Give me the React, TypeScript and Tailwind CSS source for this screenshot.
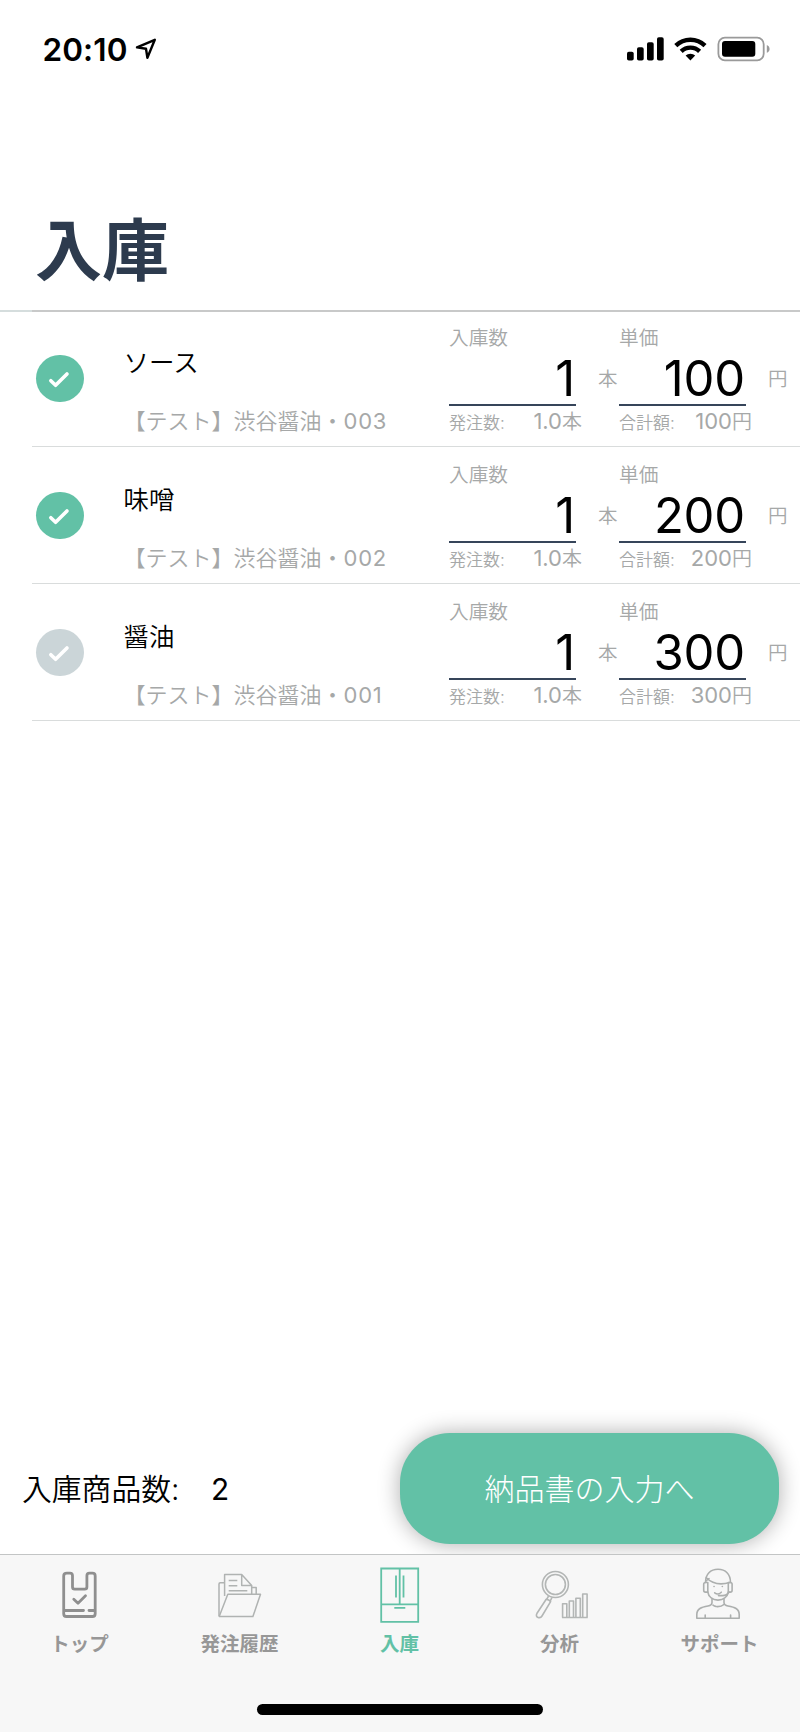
type Item = {
  name: string;
  code: string;
  price: number;
  checked: boolean;
};

const items: Item[] = [
  { name: "ソース", code: "003", price: 100, checked: true },
  { name: "味噌", code: "002", price: 200, checked: true },
  { name: "醤油", code: "001", price: 300, checked: false },
];

function StatusBar() {
  return (
    <div className="flex h-[100px] items-start justify-between pt-[30px] pl-[42.5px] pr-5">
      <div className="flex items-center">
        <span className="-mt-px w-[87.5px] text-[31.5px] leading-[38px] font-semibold tracking-[0.1px] whitespace-nowrap">
          20:10
        </span>
        <svg className="h-10 w-8" viewBox="130 30 32 40" fill="none">
          <path
            d="M137 47.4 154.8 39.8 147.4 57.8 146 48.8Z"
            stroke="#000"
            strokeWidth="2.4"
            strokeLinejoin="round"
          />
        </svg>
      </div>
      <svg className="h-10 w-40" viewBox="620 30 160 40" fill="none">
        <rect x="627" y="51.7" width="6.7" height="8.8" rx="1.8" fill="#000" />
        <rect x="637" y="47.3" width="6.7" height="13.2" rx="1.8" fill="#000" />
        <rect x="647" y="42.3" width="6.7" height="18.2" rx="1.8" fill="#000" />
        <rect x="657" y="37.3" width="6.7" height="23.2" rx="1.8" fill="#000" />
        <path
          d="M675.8 45.6a21 21 0 0 1 29.2 0M681.2 51.4a13.2 13.2 0 0 1 18.4 0"
          stroke="#000"
          strokeWidth="4.4"
        />
        <path d="M690.4 60.6 685.6 55.6a7 7 0 0 1 9.6 0Z" fill="#000" />
        <rect x="718.4" y="37.7" width="45.3" height="22.6" rx="6.5" stroke="#9a9a9a" strokeWidth="1.8" />
        <rect x="722" y="41" width="33.3" height="15.8" rx="3" fill="#000" />
        <path d="M766.8 45v7.8c1.8-.7 2.8-2.1 2.8-3.9s-1-3.2-2.8-3.9Z" fill="#9a9a9a" />
      </svg>
    </div>
  );
}

function Check({ on }: { on: boolean }) {
  return (
    <div
      className={`flex size-[47.5px] items-center justify-center rounded-full ${
        on ? "bg-[#62c1a6]" : "bg-[#cbd5d8]"
      }`}
    >
      <svg className="size-12" viewBox="0 0 48 48" fill="none">
        <path
          d="M15 25.8 19.8 30.3 31.3 19"
          stroke="#fff"
          strokeWidth="3.7"
          strokeLinecap="round"
          strokeLinejoin="round"
        />
      </svg>
    </div>
  );
}

function Field({
  label,
  value,
  note,
  total,
  unit,
}: {
  label: string;
  value: string;
  note: string;
  total: string;
  unit: string;
}) {
  return (
    <div className="w-[133px]">
      <p className="h-[30px] text-[19.7px] leading-[30px]">{label}</p>
      <p className="flex h-[53px] w-[127px] items-center justify-end border-b-2 border-[#36455a] pr-px text-[49px] leading-[50px] font-normal tracking-[-0.2px] text-black">
        {value}
      </p>
      <p className="flex h-[34px] items-center justify-between whitespace-nowrap">
        <span className="-mt-px text-[17px] leading-[34px]">{note}:</span>
        <span className="-mt-[3px] text-[22px] leading-[34px]">
          <span className="font-normal">{total}</span>
          <span className="text-[20px]">{unit}</span>
        </span>
      </p>
    </div>
  );
}

function ItemRow({ item }: { item: Item }) {
  return (
    <li className="ml-8 flex h-[137px] items-end border-b border-[#d9dcdc] font-[350] text-[#a6a8a8] first:h-[135px]">
      <div className="flex h-[135px] w-[417px] items-center">
        <div className="pl-1">
          <Check on={item.checked} />
        </div>
        <div className="h-[135px] pl-[40px] whitespace-nowrap">
          <p className="pt-[33px] text-[25.5px] leading-[38px] text-black">{item.name}</p>
          <p className="pt-[22px] text-[22px] leading-[34px]">
            【テスト】渋谷醤油・
            <span className="font-normal tracking-[0.8px]">{item.code}</span>
          </p>
        </div>
      </div>
      <div className="flex h-[134px] pt-[11px]">
        <Field label="入庫数" value="1" note="発注数" total="1.0" unit="本" />
        <p className="w-[37px] pt-[41px] pl-[16px] text-[19.5px] leading-[30px]">本</p>
        <Field
          label="単価"
          value={String(item.price)}
          note="合計額"
          total={String(item.price)}
          unit="円"
        />
        <p className="pt-[41px] pl-[16px] text-[19.5px] leading-[30px]">円</p>
      </div>
    </li>
  );
}

function BagIcon() {
  return (
    <svg className="h-[60px] w-20" viewBox="0 0 80 60" fill="none" stroke="#8f8f8f" strokeWidth="2.8" strokeLinecap="round" strokeLinejoin="round">
      <path d="M27 13.2h3q2.500 0 2.500 2.500V27q0 2.200 2.200 2.200h10q2.200 0 2.200-2.200V15.700q0-2.500 2.500-2.500h3q2.800 0 2.800 2.800V53.700q0 2.800-2.800 2.800H26.500q-2.800 0-2.800-2.800V16q0-2.800 3.300-2.800Z" />
      <path d="M25 50.500h18.500M49 50.500h5.500M33.800 39.300l4.200 4 7.500-7.500" />
    </svg>
  );
}

function FolderIcon() {
  return (
    <svg className="h-[60px] w-20" viewBox="0 0 80 60" fill="none" stroke="#b0b3b2" strokeWidth="1.5" strokeLinejoin="round">
      <path d="M19 56V24q0-1.200 1.200-1.200h4.300M24.600 36V14.600h17.100l10 10.800v8.800M41.700 14.600v10.800h10M51.700 27.600h4.500v6.700" />
      <path d="M28.700 20.400h8.600M28.700 25.700h8.600M28.700 30.700H47.300" />
      <path d="M27.800 34.300h32.700l-7.600 22.300H19.200Z" />
    </svg>
  );
}

function FridgeIcon() {
  return (
    <svg className="h-[60px] w-20 overflow-visible" viewBox="0 0 80 60" fill="none" stroke="#62c1a6" strokeWidth="1.8">
      <path d="M21.200 8.500h37v53.300h-37ZM21.200 44.300h37M39.700 8.500v35.800" />
      <path d="M36 15.500v22M43.500 15.500v22M34.300 47.900h11" />
    </svg>
  );
}

function AnalysisIcon() {
  return (
    <svg className="h-[60px] w-20" viewBox="0 0 80 60" fill="none" stroke="#b3b6b5" strokeWidth="1.6" strokeLinejoin="round">
      <circle cx="35.400" cy="24.500" r="13" />
      <circle cx="35.400" cy="24.500" r="10" />
      <path d="M28.600 36l-2.200 3.800M32 37.500l-2 3.800" />
      <path d="M26.200 39.300 17 53.300c-1.100 2-.6 3.300.6 3.900 1.500.7 3.500.4 4.400-1.200L30.600 41.600q-1.600-2-4.400-2.300Z" />
      <path d="M42.600 57.500V43.700h4.200v13.800M49.300 57.500V41h4.200v16.500M55.900 57.500V38.300h4.400v19.200M62.700 57.500V34h4.400v23.500M42 57.500h25.700" />
    </svg>
  );
}

function SupportIcon() {
  return (
    <svg className="h-[60px] w-20" viewBox="0 0 80 60" fill="none" stroke="#acafae" strokeWidth="1.6" strokeLinecap="round" strokeLinejoin="round">
      <path d="M25.500 22.500C25.500 14 30.500 9.300 38 9.300S50.500 14 50.500 22.500" />
      <path d="M26.300 17.800C33 24.500 41 25 49.700 22.500" />
      <path d="M27.800 22.500h-2.300q-1.800 0-1.800 1.800v6q0 1.800 1.800 1.800h2.300ZM48.300 22.500h2q1.800 0 1.800 1.800v6q0 1.800-1.800 1.800h-2Z" />
      <path d="M27.800 32c.8 5 5 8.100 10.200 8.100s9.400-3.100 10.300-8.100M26 21l3-2.500" />
      <path d="M34.700 32.800q3.300 2.600 6.600-.6M38.500 35.600h4q4.500 0 6.500-3.600" />
      <path d="M34 26.500h.1M42.300 26.500h.1" />
      <path d="M32 39v3.500c0 2.500-1.500 3-4 3.500-6.500 1.200-11.200 2.500-11.200 8.500v3.800h42.400v-3.800c0-6-4.700-7.300-11.200-8.500-2.500-.5-4-1-4-3.500V39M33 45.200q1.500 1.200 2.800 1.200M37 46.600q4.500.2 6.500-1.900M25.200 55v3.300M50.600 55v3.300" />
    </svg>
  );
}

const tabs = [
  { label: "トップ", icon: <BagIcon />, active: false },
  { label: "発注履歴", icon: <FolderIcon />, active: false },
  { label: "入庫", icon: <FridgeIcon />, active: true },
  { label: "分析", icon: <AnalysisIcon />, active: false },
  { label: "サポート", icon: <SupportIcon />, active: false },
];

function TabBar() {
  return (
    <nav className="relative h-[178px] border-t border-[#c3c5c5] bg-[#f7f7f7] pt-[5px]">
      <div className="grid grid-cols-5">
        {tabs.map((tab) => (
          <div key={tab.label} className="flex flex-col items-center">
            {tab.icon}
            <span
              className={`pt-[9px] pr-px text-[19.5px] leading-[30px] font-bold ${
                tab.active ? "text-[#62c1a6]" : "text-[#979797]"
              }`}
            >
              {tab.label}
            </span>
          </div>
        ))}
      </div>
      <div className="mx-auto mt-[45px] h-[11px] w-[286px] rounded-full bg-black" />
    </nav>
  );
}

export default function App() {
  return (
    <div className="flex h-[1732px] w-[800px] flex-col overflow-hidden bg-white font-['Inter','Noto_Sans_CJK_JP',sans-serif] text-black">
      <StatusBar />
      <h1 className="h-[210px] pt-[103px] pl-[35px] text-[67px] leading-[96px] font-bold text-[#2d3b4e]">
        入庫
      </h1>
      <div className="flex h-0.5">
        <div className="w-8 bg-[#d5dddd]" />
        <div className="flex-1 bg-[#c8c9c9]" />
      </div>
      <ul>
        {items.map((item) => (
          <ItemRow key={item.code} item={item} />
        ))}
      </ul>
      <div className="mt-auto flex h-[121px] items-start justify-between pl-[22px] pr-[21px]">
        <p className="flex pt-[34px] text-[29.8px] leading-[44px]">
          <span className="w-[189px] font-[350]">入庫商品数:</span>
          <span>2</span>
        </p>
        <button className="h-[111px] w-[379px] rounded-[50px] bg-[#62c1a6] pt-[2px] text-[30px] font-light text-white shadow-[0_0_22px_rgba(0,0,0,0.32)]">
          納品書の入力へ
        </button>
      </div>
      <TabBar />
    </div>
  );
}
